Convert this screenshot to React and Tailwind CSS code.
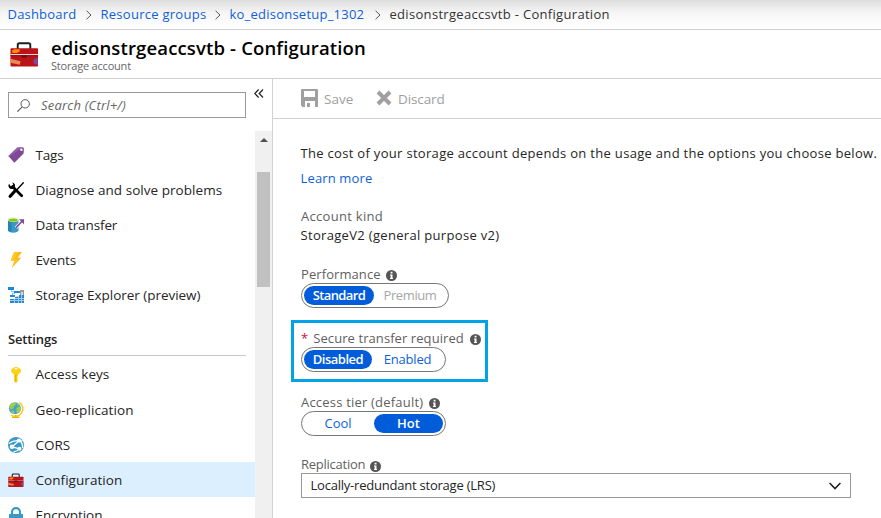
import React from "react";

function Toolbox({ className }) {
  return (
    <svg className={className} viewBox="0 0 30 26">
      <path d="M8 8V3.500Q8 1.800 9.800 1.800h9.400Q21 1.800 21 3.500V8" fill="none" stroke="#1e1e1e" strokeWidth="2" />
      <rect x="0.500" y="7" width="28.500" height="19" rx="0.800" fill="#ba141a" />
      <rect x="0.500" y="13" width="28.500" height="1.200" fill="#f3d5d5" />
      <rect x="0.500" y="14.200" width="28.500" height="1.200" fill="#8f0f13" />
      <path d="M2 9.500 5 8.200 10 8v2.500L7 12H2.500z" fill="#ff8c00" />
      <path d="M.5 18 11 20.500l-1 3.500L.5 22z" fill="#e98b50" />
      <path d="M28.900 17.500c-6-.5-6.500 6.500-1 6.500h1z" fill="#804998" />
      <rect x="12" y="14" width="5.500" height="3" fill="#7a0c10" />
    </svg>
  );
}

function TagIcon() {
  return (
    <svg className="size-4" viewBox="0 0 16 16">
      <path d="M9.300.4 14.500.2Q16 .3 15.900 1.800L15.600 6.400 6.400 15.700.3 9z" fill="#804998" />
      <path d="M9.300.4 14.500.2.9 9.700.3 9z" fill="#a06fb5" opacity=".6" />
      <circle cx="13.400" cy="2.700" r="1.200" fill="#fff" />
    </svg>
  );
}

function ToolsIcon() {
  return (
    <svg className="size-4" viewBox="0 0 16 16">
      <path d="M4.500 4.500 13.700 13.800" stroke="#000" strokeWidth="2.700" strokeLinecap="round" />
      <path d="M1.100 1.800A3.300 3.300 0 1 0 4.300.5L5.200 2.600 4 4.200 2.400 4z" fill="#000" />
      <path d="M15.300.7 8.700 8" stroke="#000" strokeWidth="1.300" strokeLinecap="round" />
      <path d="M6.700 9.200 2.200 14.200" stroke="#000" strokeWidth="3.200" strokeLinecap="round" />
    </svg>
  );
}

function TransferIcon() {
  return (
    <svg className="size-4" viewBox="0 0 16 16">
      <path d="M0 2.800h10.500v10.500c0 3.200-10.500 3.200-10.500 0z" fill="#3999c6" />
      <path d="M0 2.800h3.500v12.100C1.500 14.700 0 14 0 13.300z" fill="#2684b2" />
      <ellipse cx="5.250" cy="2.800" rx="5.250" ry="2.200" fill="#dff0c0" />
      <ellipse cx="5.250" cy="2.900" rx="4.300" ry="1.500" fill="#8bc800" />
      <path d="M8 10.800 14 4.200" stroke="#fff" strokeWidth="3" />
      <path d="M8 10.800 14 4.200" stroke="#804998" strokeWidth="1.700" />
      <path d="M11 2.300h5v5z" fill="#804998" />
    </svg>
  );
}

function BoltIcon() {
  return (
    <svg className="size-4" viewBox="0 0 16 16">
      <path d="M6 0h7.800L9.700 5.800h3.500L3.800 16l2.600-7.200H2.600z" fill="#fcb714" />
      <path d="M6 0h5L6.400 7.200h4L3.800 16l2.600-7.200H2.600z" fill="#ffd52e" opacity=".55" />
    </svg>
  );
}

function ExplorerIcon() {
  return (
    <svg className="size-4" viewBox="0 0 16 16" shapeRendering="crispEdges">
      <path d="M12 3h4v2h-4zM12 5h1v3h-1zM15 5h1v3h-1z" fill="#999" />
      <path d="M13 5h2v3h-2zM8 9h3v1H8z" fill="#d5d5d5" />
      <path d="M0 0h6v3H0zM6 4h6v2H6zM2 8h5v2H2z" fill="#1e87d6" />
      <path d="M3 3h1v1h2v1H3zM4 6h3v1H5v1H4z" fill="#8cc4ea" />
      <path d="M2 12h14v4H2zM11 8h5v4h-5zM7 10h4v2H7z" fill="#2b86cf" />
      <path d="M2 13h14v1H2zM7 11h9v1H7zM6 12h1v4H6zM10 10h1v6h-1zM13 8h1v8h-1z" fill="#9bcbee" />
    </svg>
  );
}

function KeyIcon() {
  return (
    <svg className="size-4" viewBox="0 0 16 16">
      <path d="M5 .9Q8-.7 11 .9 13.200 2.200 13 4.300 12.700 6 10 7.500V9l-1 1 1 1-1 1 1 1-.3 1L8 16l-1.900-1.500V7.500Q3.400 6 3 4.300 2.900 2.200 5 .9z" fill="#fcd116" />
      <path d="M7.300 7.500h.9V15l-.9-.7z" fill="#e8a900" />
      <ellipse cx="8" cy="1.800" rx="1.600" ry=".8" fill="#fff" />
    </svg>
  );
}

function GlobeIcon() {
  return (
    <svg className="size-4" viewBox="0 0 16 16">
      <path d="M11.500.4A7.200 7.200 0 0 1 3 13" fill="none" stroke="#fcc419" strokeWidth="1.400" />
      <path d="M7 13h1.500v1.400H7zM4 14.400h7.400V16H4z" fill="#f5b400" />
      <circle cx="6.900" cy="6.300" r="6" fill="#43a4d3" />
      <path d="M3.500 1.600 7.500.5 8 2.500 5.800 4.300 5.200 6.500 2.600 7.400 1.200 5zM8.500 6l3.500-1.700.9 2.200-2 4-2.300.5zM3 9l2.600-.4 1 2.600-1 1zM9 1.300l2 1-.6 1.500L9 3z" fill="#a4cf3a" />
    </svg>
  );
}

function CorsIcon() {
  return (
    <svg className="size-4" viewBox="0 0 16 16">
      <circle cx="8" cy="8" r="8" fill="#3999c6" />
      <path d="M.8 6.500Q5 3.200 10.500 3.600L14.500 3.800M4.200 9.800 11.300 3.400M4.200 9.800 11.500 11.900M11.300 3.400Q15 6 14.600 11M5.500 15Q9 14.500 11.500 11.900" fill="none" stroke="#fff" strokeWidth="1.300" />
      <g fill="#fff">
        <circle cx="11" cy="3.500" r="2.100" />
        <circle cx="4" cy="9.800" r="2.300" />
        <circle cx="11.500" cy="11.800" r="2" />
      </g>
    </svg>
  );
}

function LockIcon() {
  return (
    <svg className="size-4" viewBox="0 0 16 16">
      <path d="M4 8V5.200a4 4 0 0 1 8 0V8" fill="none" stroke="#3999c6" strokeWidth="2.200" />
      <path d="M1 7h14v9H1z" fill="#3999c6" />
    </svg>
  );
}

function InfoIcon({ className }) {
  return (
    <svg className={`size-[11px] shrink-0 ${className}`} viewBox="0 0 11 11">
      <circle cx="5.500" cy="5.500" r="5.500" fill="#555" />
      <path d="M4.600 1.800h1.900v1.700H4.600zM4 4.400h2.500v3.500H7V9H4V7.900h.6V5.400H4z" fill="#fff" />
    </svg>
  );
}

function Chevron() {
  return (
    <svg className="h-[10px] w-[6px] shrink-0" viewBox="0 0 6 10">
      <path d="M.6.8 5 5 .6 9.200" fill="none" stroke="#555" strokeWidth="1" />
    </svg>
  );
}

const resources = [
  { label: "Tags", icon: <TagIcon />, track: "tracking-[-0.2px]" },
  { label: "Diagnose and solve problems", icon: <ToolsIcon />, track: "tracking-[0.05px]" },
  { label: "Data transfer", icon: <TransferIcon />, track: "tracking-[-0.12px]" },
  { label: "Events", icon: <BoltIcon />, track: "tracking-[-0.15px]" },
  { label: "Storage Explorer (preview)", icon: <ExplorerIcon />, track: "tracking-[-0.03px]" },
];

const settings = [
  { label: "Access keys", icon: <KeyIcon />, track: "tracking-[0.05px]", text: "pb-px" },
  { label: "Geo-replication", icon: <GlobeIcon />, track: "tracking-[0.1px]" },
  { label: "CORS", icon: <CorsIcon />, track: "tracking-[0px]" },
  { label: "Configuration", icon: <Toolbox className="h-4 w-4" />, track: "tracking-[0.05px]", selected: true },
  { label: "Encryption", icon: <LockIcon />, track: "tracking-[-0.05px]" },
];

function MenuItem({ item }) {
  return (
    <div className={`flex h-[35px] shrink-0 items-center pl-2 ${item.selected ? "bg-[#dceffe]" : ""}`}>
      {item.icon}
      <span className={`ml-[11.500px] text-[13.500px] ${item.text ?? "pt-px"} ${item.track}`}>{item.label}</span>
    </div>
  );
}

function Label({ children, className, info }) {
  return (
    <div className={`flex h-[18px] items-center text-[13px] text-[#5f5f5f] ${className}`}>
      {children}
      {info && <InfoIcon className={info} />}
    </div>
  );
}

export default function App() {
  return (
    <div className="flex h-[518px] w-[881px] flex-col overflow-hidden bg-white font-['Open_Sans','Noto_Sans',sans-serif] whitespace-nowrap text-[#252525]">
      <nav className="flex h-[30px] shrink-0 items-center border-b border-[#d0d0d0] bg-linear-to-b from-[#dedede] via-[#f6f6f6] via-45% to-white pl-[7.500px] text-[13px] text-[#0f5fd7]">
        <span className="w-[69px] tracking-[0.2px]">Dashboard</span>
        <span className="flex w-[24px] pl-[9.500px]"><Chevron /></span>
        <span className="w-[105px] tracking-[0.27px]">Resource groups</span>
        <span className="flex w-[24px] pl-[9px]"><Chevron /></span>
        <span className="w-[135px] tracking-[0.23px]">ko_edisonsetup_1302</span>
        <span className="flex w-[25px] pl-[10px]"><Chevron /></span>
        <span className="tracking-[0.31px] text-[#333]">edisonstrgeaccsvtb - Configuration</span>
      </nav>

      <header className="flex h-[49px] shrink-0 border-b border-[#d0d0d0] pl-[10px]">
        <Toolbox className="mt-[11px] h-[26px] w-[29px]" />
        <div className="ml-3 flex flex-col pt-[6px]">
          <h1 className="h-[23px] text-[18.500px] leading-[23px] font-semibold tracking-[0.15px] text-black">edisonstrgeaccsvtb - Configuration</h1>
          <p className="text-[11px] leading-[14px] tracking-[-0.2px] text-[#666]">Storage account</p>
        </div>
      </header>

      <div className="flex min-h-0 flex-1">
        <aside className="flex w-[273px] shrink-0 flex-col border-r border-[#d0d0d0]">
          <div className="flex h-[52px] shrink-0 pl-2">
            <div className="mt-[13px] flex h-[26px] w-[238px] items-center border border-[#999] pl-2">
              <svg className="size-[13px]" viewBox="0 0 13 13">
                <circle cx="8.200" cy="4.800" r="4.200" fill="none" stroke="#555" />
                <path d="M5.200 7.800.4 12.600" stroke="#555" strokeWidth="1.100" />
              </svg>
              <span className="ml-[11px] pt-px text-[13px] tracking-[0.2px] text-[#666] italic">Search (Ctrl+/)</span>
            </div>
            <svg className="mt-[10px] ml-[8px] h-[9px] w-[10px]" viewBox="0 0 10 9">
              <path d="M4.600.5.8 4.500l3.800 4M9 .5 5.200 4.500 9 8.500" fill="none" stroke="#222" strokeWidth="1.200" />
            </svg>
          </div>
          <div className="flex min-h-0 flex-1">
            <div className="flex w-[255px] flex-col overflow-hidden pt-[6px]">
              {resources.map((item) => <MenuItem key={item.label} item={item} />)}
              <div className="mr-[9px] mb-px ml-2 h-[44px] shrink-0 border-b border-[#c8c8c8] pt-[17px] text-[13px] leading-[20px] font-semibold tracking-[-0.15px]">Settings</div>
              {settings.map((item) => <MenuItem key={item.label} item={item} />)}
            </div>
            <div className="flex w-[17px] flex-col items-center bg-[#f0f0f0]">
              <div className="mt-[7px] mb-[30px] size-0 border-x-4 border-b-4 border-x-transparent border-b-[#505050]" />
              <div className="h-[115px] w-[13px] bg-[#c1c1c1]" />
            </div>
          </div>
        </aside>

        <main className="flex min-w-0 flex-1 flex-col">
          <div className="flex h-[40px] shrink-0 items-center border-b border-[#d0d0d0] pl-[28px] text-[13.500px] text-[#a0a0a0]">
            <svg className="mb-[2px] size-[18px]" viewBox="0 0 18 18">
              <path d="M1 0h15q1 0 1 1v17h-3v-6H4v6H1.500L0 16.500V1q0-1 1-1zM3 2v6h11V2zM6 14h3v4H6z" fill="#a0a0a0" fillRule="evenodd" />
            </svg>
            <span className="ml-[5px] w-[51.500px] pt-[2px]">Save</span>
            <svg className="mb-px size-[16px]" viewBox="0 0 16 16">
              <path d="M2 2 14 14M14 2 2 14" stroke="#a0a0a0" strokeWidth="4" />
            </svg>
            <span className="ml-[6.500px] pt-[2px] tracking-[-0.1px]">Discard</span>
          </div>

          <div className="flex flex-col pl-[28px]">
            <p className="mt-[24px] -ml-[0.5px] h-[20px] text-[13px] leading-[20px] tracking-[0.31px]">The cost of your storage account depends on the usage and the options you choose below.</p>
            <a className="mt-[5px] -ml-[0.5px] h-[20px] text-[13px] leading-[20px] tracking-[0.15px] text-[#0f5fd7]">Learn more</a>
            <Label className="mt-[20px] tracking-[0.3px]">Account kind</Label>
            <p className="-ml-[0.5px] h-[20px] text-[13px] leading-[19px] tracking-[0.32px]">StorageV2 (general purpose v2)</p>

            <Label className="mt-[20px] tracking-[0.08px]" info="ml-[5px] mt-[1px]">Performance</Label>
            <div className="-mt-px flex h-[25px] w-[148px] items-center rounded-full border border-[#777] px-[2px] text-[13px]">
              <span className="flex h-[19px] w-[70px] items-center justify-center rounded-full bg-[#015cda] pt-px font-semibold tracking-[-0.6px] text-white">Standard</span>
              <span className="flex-1 pt-px text-center tracking-[-0.4px] text-[#a6a6a6]">Premium</span>
            </div>

            <div className="mt-[12px] -ml-[10px] h-[62px] w-[197px] border-3 border-[#00a2e8] pl-[7px]">
              <Label className="mt-[7px] tracking-[0.08px]" info="ml-[6px] mt-[1px]">
                <span className="mr-[5px] text-[#e00b1c]">*</span>Secure transfer required
              </Label>
              <div className="-mt-px flex h-[25px] w-[145px] items-center rounded-full border border-[#777] px-[2px] text-[13px]">
                <span className="flex h-[19px] w-[68px] items-center justify-center rounded-full bg-[#015cda] font-semibold tracking-[-0.5px] text-white">Disabled</span>
                <span className="flex-1 text-center tracking-[-0.2px] text-[#0f5fd7]">Enabled</span>
              </div>
            </div>

            <Label className="mt-[12px] tracking-[0.2px]" info="ml-[6px] mt-[1px]">Access tier (default)</Label>
            <div className="-mt-px flex h-[25px] w-[145px] items-center rounded-full border border-[#777] px-[2px] text-[13px]">
              <span className="flex-1 pr-[2px] text-center text-[#0f5fd7]">Cool</span>
              <span className="flex h-[19px] w-[69px] items-center justify-center rounded-full bg-[#015cda] font-semibold text-white">Hot</span>
            </div>

            <Label className="mt-[20px] tracking-[-0.25px]" info="ml-[5px] mt-[3px]">Replication</Label>
            <div className="-mt-px flex h-[25px] w-[550px] items-center justify-between border border-[#999] pr-[9px] pl-[8.500px] text-[13px]">
              <span className="tracking-[-0.22px]">Locally-redundant storage (LRS)</span>
              <svg className="h-[8px] w-[12px]" viewBox="0 0 12 8">
                <path d="M.6 1 6 6.500 11.400 1" fill="none" stroke="#222" strokeWidth="1.600" />
              </svg>
            </div>
          </div>
        </main>
      </div>
    </div>
  );
}
